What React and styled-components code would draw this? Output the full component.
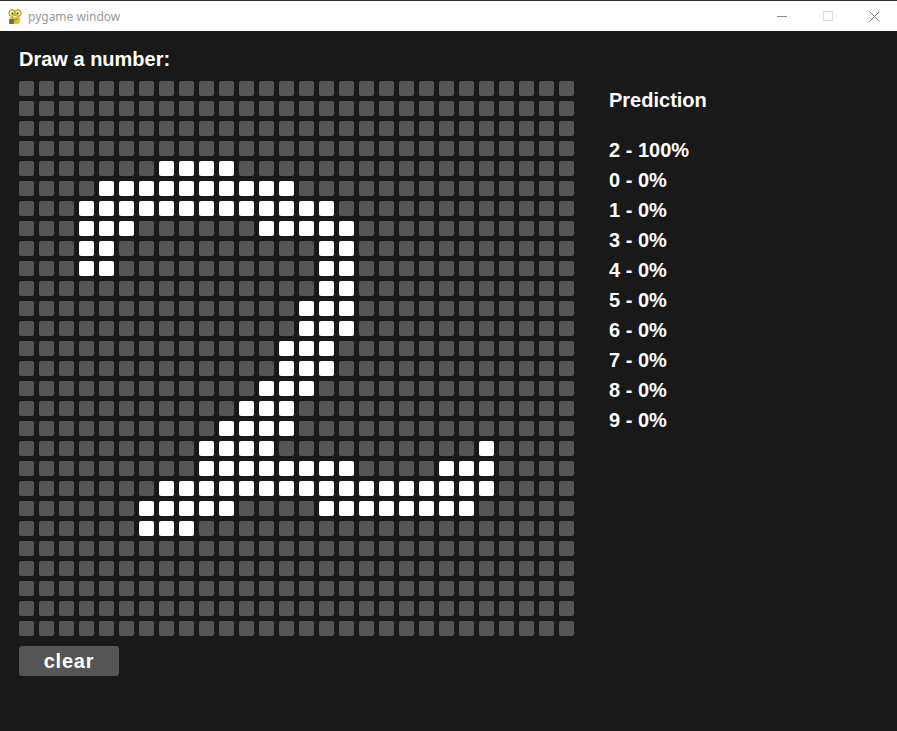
import React from "react";
import styled, { createGlobalStyle } from "styled-components";

const GlobalStyle = createGlobalStyle`
  html, body { margin: 0; padding: 0; background: #191919; }
  body { font-family: "Liberation Sans", Arial, sans-serif; }
`;

const Window = styled.div`
  width: 897px;
  height: 731px;
  display: flex;
  flex-direction: column;
  background: #191919;
  overflow: hidden;
`;

const TitleBar = styled.div`
  height: 30px;
  border-top: 1px solid #2e2e2e;
  background: #ffffff;
  display: flex;
  align-items: center;
  flex-shrink: 0;
`;

const AppIcon = styled.svg`
  width: 16px;
  height: 17px;
  margin-left: 7px;
  margin-top: 1px;
`;

const TitleText = styled.span`
  margin-left: 5px;
  font-family: "Noto Sans", "Open Sans", sans-serif;
  font-size: 12px;
  color: #9a9a9a;
  flex: 1;
`;

const Controls = styled.div`
  display: flex;
  align-items: center;
  height: 100%;
`;

const CtrlBtn = styled.div`
  width: 46px;
  height: 100%;
  display: flex;
  align-items: center;
  justify-content: center;
`;

const Content = styled.div`
  flex: 1;
  display: flex;
  padding: 18px 0 0 19px;
  gap: 35px;
`;

const LeftCol = styled.div`
  display: flex;
  flex-direction: column;
`;

const Heading = styled.div`
  font-size: 20px;
  line-height: 20px;
  font-weight: 700;
  color: #ffffff;
`;

const Grid = styled.div`
  margin-top: 12px;
  display: grid;
  grid-template-columns: repeat(28, 15px);
  grid-auto-rows: 15px;
  gap: 5px;
`;

const Cell = styled.div`
  width: 15px;
  height: 15px;
  border-radius: 2px;
  background: ${(p) => (p.$on ? "#ffffff" : "#555555")};
`;

const ClearButton = styled.button`
  margin-top: 10px;
  width: 100px;
  height: 30px;
  border: none;
  border-radius: 3px;
  background: #555555;
  color: #ffffff;
  font-family: "Liberation Sans", Arial, sans-serif;
  font-weight: 700;
  font-size: 20px;
  line-height: 30px;
  letter-spacing: 0.8px;
  padding: 0;
  cursor: pointer;
`;

const RightCol = styled.div`
  padding-top: 41px;
  display: flex;
  flex-direction: column;
`;

const List = styled.div`
  margin-top: 25px;
  display: flex;
  flex-direction: column;
`;

const Row = styled.div`
  font-size: 20px;
  line-height: 30px;
  font-weight: 700;
  color: #ffffff;
`;

const drawn = {
  4: [[7, 10]],
  5: [[4, 13]],
  6: [[3, 15]],
  7: [[3, 5], [12, 16]],
  8: [[3, 4], [15, 16]],
  9: [[3, 4], [15, 16]],
  10: [[15, 16]],
  11: [[14, 16]],
  12: [[14, 16]],
  13: [[13, 15]],
  14: [[13, 15]],
  15: [[12, 14]],
  16: [[11, 13]],
  17: [[10, 13]],
  18: [[9, 12], [23, 23]],
  19: [[9, 16], [21, 23]],
  20: [[7, 23]],
  21: [[6, 10], [15, 22]],
  22: [[6, 8]],
};

const isOn = (r, c) => (drawn[r] || []).some(([a, b]) => c >= a && c <= b);

const predictions = [
  "2 - 100%",
  "0 - 0%",
  "1 - 0%",
  "3 - 0%",
  "4 - 0%",
  "5 - 0%",
  "6 - 0%",
  "7 - 0%",
  "8 - 0%",
  "9 - 0%",
];

export default function App() {
  const cells = [];
  for (let r = 0; r < 28; r++) {
    for (let c = 0; c < 28; c++) {
      cells.push(<Cell key={`${r}-${c}`} $on={isOn(r, c)} />);
    }
  }
  return (
    <>
      <GlobalStyle />
      <Window>
        <TitleBar>
          <AppIcon viewBox="0 0 16 17">
            <path d="M3 9 Q2 14 6 16 L11 16 Q14 14 13 9 Z" fill="#e8c21a" />
            <rect x="2" y="11" width="5" height="5" rx="1" fill="#6b6b6b" />
            <ellipse cx="5" cy="5" rx="3.3" ry="3.5" fill="#f2d22a" stroke="#8a7a10" strokeWidth="0.6" />
            <ellipse cx="11" cy="5" rx="3.3" ry="3.5" fill="#f2d22a" stroke="#8a7a10" strokeWidth="0.6" />
            <circle cx="5" cy="5" r="2" fill="#fff" />
            <circle cx="11" cy="5" r="2" fill="#fff" />
            <circle cx="5.5" cy="5.5" r="1" fill="#222" />
            <circle cx="10.5" cy="5.5" r="1" fill="#222" />
            <path d="M5 11 Q8 13 11 11" stroke="#8a7a10" strokeWidth="0.8" fill="none" />
          </AppIcon>
          <TitleText>pygame window</TitleText>
          <Controls>
            <CtrlBtn>
              <svg width="10" height="10" viewBox="0 0 10 10">
                <line x1="0" y1="5.5" x2="10" y2="5.5" stroke="#8a8a8a" strokeWidth="1" />
              </svg>
            </CtrlBtn>
            <CtrlBtn>
              <svg width="10" height="10" viewBox="0 0 10 10">
                <rect x="0.5" y="0.5" width="9" height="9" fill="none" stroke="#dcdcdc" strokeWidth="1" />
              </svg>
            </CtrlBtn>
            <CtrlBtn>
              <svg width="11" height="11" viewBox="0 0 11 11">
                <path d="M0.5 0.5 L10.5 10.5 M10.5 0.5 L0.5 10.5" stroke="#7a7a7a" strokeWidth="1" />
              </svg>
            </CtrlBtn>
          </Controls>
        </TitleBar>
        <Content>
          <LeftCol>
            <Heading>Draw a number:</Heading>
            <Grid>{cells}</Grid>
            <ClearButton>clear</ClearButton>
          </LeftCol>
          <RightCol>
            <Heading>Prediction</Heading>
            <List>
              {predictions.map((p) => (
                <Row key={p}>{p}</Row>
              ))}
            </List>
          </RightCol>
        </Content>
      </Window>
    </>
  );
}
